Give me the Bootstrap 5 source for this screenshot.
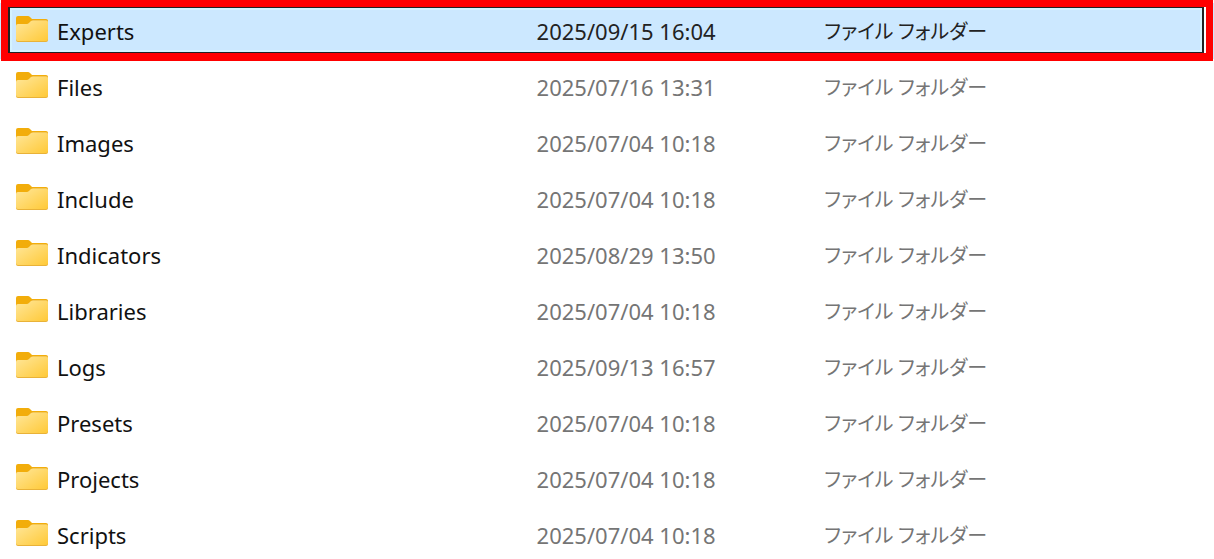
<!DOCTYPE html>
<html lang="ja">
<head>
<meta charset="utf-8">
<meta name="viewport" content="width=device-width, initial-scale=1">
<title>Experts</title>
<link href="https://cdn.jsdelivr.net/npm/bootstrap@5.3.0/dist/css/bootstrap.min.css" rel="stylesheet">
<style>
  body { background: #fff; color: #111; font-family: "Noto Sans", "Noto Sans CJK JP", sans-serif; font-size: 22px; line-height: 32px; overflow-x: hidden; }
  .listing { padding-top: 3px; }
  .files { table-layout: fixed; border-collapse: collapse; color: #111; }
  .files td, .files th { height: 56px; padding: 0; font-weight: 400; white-space: nowrap; vertical-align: middle; }
  .files td { color: #757575; }
  .files .kind { font-family: "Noto Sans CJK JP", sans-serif; font-feature-settings: "palt"; font-size: 20px; }
  .files .name-col { width: 44.2%; }
  .files .date-col { width: 23.7%; }
  .files .folder { width: 34px; height: 30px; margin: 0 0 4px 15px; }
  .files .picked { position: relative; background: #cce8ff; }
  .files .picked td { color: #222; }
  /* keyboard focus rectangle */
  .picked th::before { content: ""; position: absolute; inset: 4px 10px 6px 8px; border: 1px solid #222; border-width: 1px 2px; box-shadow: inset 0 0 0 2px #d4f2ff, 2px 0 #fff; }
  /* red call-out frame */
  .picked th::after { content: ""; position: absolute; inset: -3px 1px -2px 1px; border: 8px solid #f00; border-width: 7px 7px 8px; pointer-events: none; }
  .picked > * > * { position: relative; z-index: 1; }
</style>
<script src="https://cdn.jsdelivr.net/npm/bootstrap@5.3.0/dist/js/bootstrap.bundle.min.js"></script>
</head>
<body>
<svg width="0" height="0" class="position-absolute" aria-hidden="true">
  <defs>
    <linearGradient id="front" x1="0" y1="0" x2="1" y2="1">
      <stop offset="0" stop-color="#ffe79b"/><stop offset="1" stop-color="#ffc937"/>
    </linearGradient>
    <symbol id="folder" viewBox="0 0 34 30">
      <path d="M1 4Q1 2 3 2H13Q14 2 15 3L17 5H31Q33 5 33 7V16H1Z" fill="#f2ad0b"/>
      <path d="M1 12Q1 10 3 10H12Q13 10 14 9L16 7Q17 6 18 6H31Q33 6 33 8V26Q33 28 31 28H3Q1 28 1 26Z" fill="#e9b238"/>
      <path d="M1 12Q1 10 3 10H12Q13 10 14 9L16 7Q17 6.500 18 6.500H31Q33 6.500 33 8V25Q33 27 31 27H3Q1 27 1 25Z" fill="url(#front)"/>
    </symbol>
  </defs>
</svg>
<main class="listing">
  <table class="files w-100">
    <colgroup><col class="name-col"><col class="date-col"><col></colgroup>
    <tbody>
      <tr class="picked" aria-selected="true"><th scope="row"><div class="d-flex align-items-center gap-2"><svg class="folder" aria-hidden="true"><use href="#folder"/></svg><span>Experts</span></div></th><td><span>2025/09/15 16:04</span></td><td class="kind"><span>ファイル フォルダー</span></td></tr>
      <tr><th scope="row"><div class="d-flex align-items-center gap-2"><svg class="folder" aria-hidden="true"><use href="#folder"/></svg><span>Files</span></div></th><td>2025/07/16 13:31</td><td class="kind">ファイル フォルダー</td></tr>
      <tr><th scope="row"><div class="d-flex align-items-center gap-2"><svg class="folder" aria-hidden="true"><use href="#folder"/></svg><span>Images</span></div></th><td>2025/07/04 10:18</td><td class="kind">ファイル フォルダー</td></tr>
      <tr><th scope="row"><div class="d-flex align-items-center gap-2"><svg class="folder" aria-hidden="true"><use href="#folder"/></svg><span>Include</span></div></th><td>2025/07/04 10:18</td><td class="kind">ファイル フォルダー</td></tr>
      <tr><th scope="row"><div class="d-flex align-items-center gap-2"><svg class="folder" aria-hidden="true"><use href="#folder"/></svg><span>Indicators</span></div></th><td>2025/08/29 13:50</td><td class="kind">ファイル フォルダー</td></tr>
      <tr><th scope="row"><div class="d-flex align-items-center gap-2"><svg class="folder" aria-hidden="true"><use href="#folder"/></svg><span>Libraries</span></div></th><td>2025/07/04 10:18</td><td class="kind">ファイル フォルダー</td></tr>
      <tr><th scope="row"><div class="d-flex align-items-center gap-2"><svg class="folder" aria-hidden="true"><use href="#folder"/></svg><span>Logs</span></div></th><td>2025/09/13 16:57</td><td class="kind">ファイル フォルダー</td></tr>
      <tr><th scope="row"><div class="d-flex align-items-center gap-2"><svg class="folder" aria-hidden="true"><use href="#folder"/></svg><span>Presets</span></div></th><td>2025/07/04 10:18</td><td class="kind">ファイル フォルダー</td></tr>
      <tr><th scope="row"><div class="d-flex align-items-center gap-2"><svg class="folder" aria-hidden="true"><use href="#folder"/></svg><span>Projects</span></div></th><td>2025/07/04 10:18</td><td class="kind">ファイル フォルダー</td></tr>
      <tr><th scope="row"><div class="d-flex align-items-center gap-2"><svg class="folder" aria-hidden="true"><use href="#folder"/></svg><span>Scripts</span></div></th><td>2025/07/04 10:18</td><td class="kind">ファイル フォルダー</td></tr>
    </tbody>
  </table>
</main>
</body>
</html>
